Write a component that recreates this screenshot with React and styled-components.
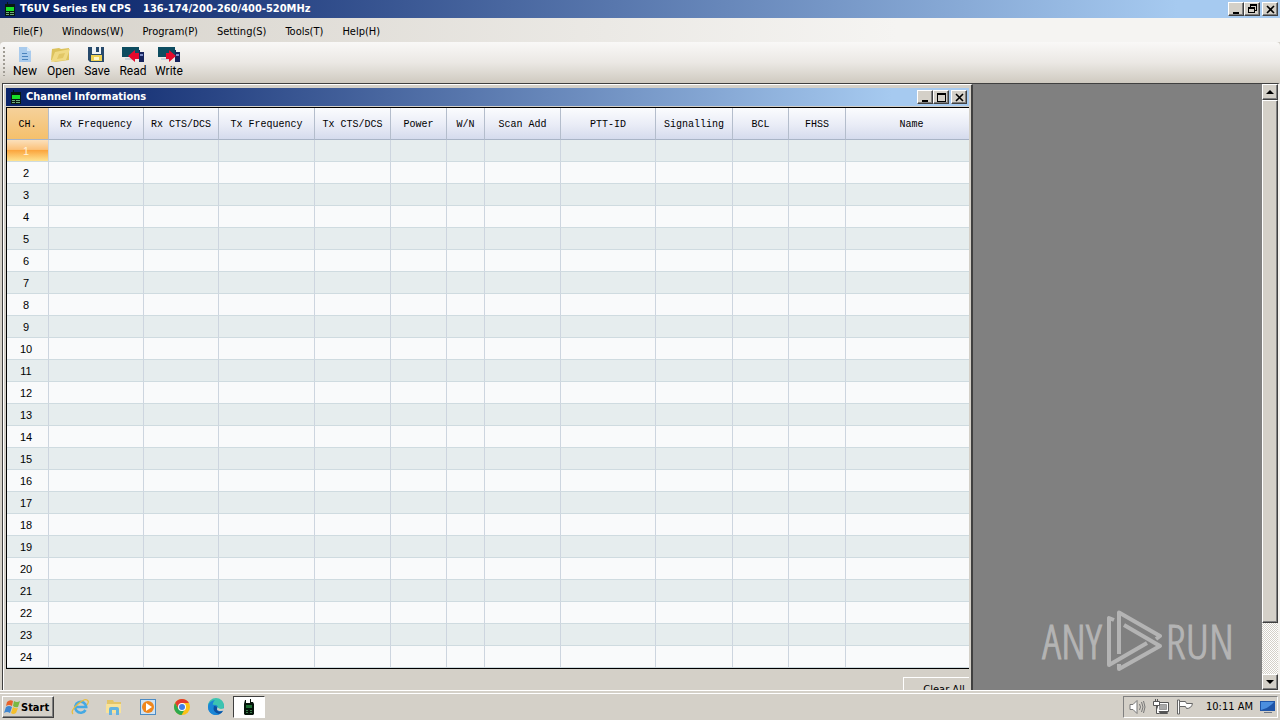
import React from "react";
import styled, { createGlobalStyle, css } from "styled-components";

const UI = `"DejaVu Sans Condensed", "DejaVu Sans", sans-serif`;

const Global = createGlobalStyle`
  * { box-sizing: border-box; }
  body { margin: 0; background: #d4d0c8; font-family: ${UI}; font-size: 11px; color: #000; }
  button { font: inherit; color: inherit; margin: 0; padding: 0; border: 0; background: none; }
  svg { display: block; }
`;

const Shell = styled.div`
  display: flex;
  flex-direction: column;
  height: 100vh;
  overflow: hidden;
`;

const TitleBar = styled.header`
  display: flex;
  align-items: center;
  flex: none;
  height: 18px;
  padding: 0 2px 0 4px;
  gap: 4px;
  background: linear-gradient(90deg, #0a246a 4%, #a6caf0 92%);
  color: #fff;
`;

const Title = styled.h1`
  display: flex;
  flex: 1;
  gap: 12px;
  margin: 0;
  font-size: 11px;
  line-height: 18px;
  font-weight: bold;
`;

const WinButtons = styled.div`
  display: flex;
  button:last-child { margin-left: 2px; }
`;

const raised = css`
  background: #d4d0c8;
  border: 1px solid;
  border-color: #fff #404040 #404040 #fff;
  box-shadow: inset -1px -1px 0 #808080;
`;

const WinButton = styled.button`
  ${raised}
  display: grid;
  place-items: center;
  width: 16px;
  height: 14px;
`;

const MenuBar = styled.nav`
  display: flex;
  flex: none;
  height: 24px;
  padding: 0 3px;
  background: linear-gradient(90deg, #d6d2ca, #f5f4f2 70%);
`;

const MenuButton = styled.button`
  padding: 3px 10px 0 10px;
  line-height: 22px;
  & + & { padding-left: 9px; }
`;

const ToolBar = styled.div`
  display: flex;
  flex: none;
  height: 41px;
  padding: 3px 3px 0;
  border-radius: 4px 4px 0 0;
  background: linear-gradient(#f9f8f7, #ebe8e4 50%, #cfcac0);
`;

const Grip = styled.div`
  width: 2px;
  margin: 2px 2px 7px 0;
  background: repeating-linear-gradient(#a09c94 0 2px, transparent 2px 4px);
`;

const ToolButton = styled.button`
  display: flex;
  flex-direction: column;
  align-items: center;
  width: 36px;
  font-family: Roboto, sans-serif;
  font-size: 12px;
  line-height: 16px;
  padding-top: 1px;
`;

const Workspace = styled.main`
  display: flex;
  flex: 1;
  min-height: 0;
  margin-left: 2px;
  border-top: 1px solid #404040;
  border-left: 1px solid #404040;
  border-right: 2px solid #f4f2ee;
  background: #808080;
`;

const Canvas = styled.div`
  display: flex;
  flex: 1;
  min-width: 0;
  justify-content: space-between;
  align-items: flex-start;
  overflow: hidden;
  height: 100%;
`;

const ChildWindow = styled.section`
  flex: none;
  width: 970px;
  max-width: 100%;
  min-height: 640px;
  padding: 3px 2px 2px 2px;
  background: #d4d0c8;
  border: 1px solid;
  border-width: 1px 2px 2px 1px;
  border-color: #fff #404040 #404040 #fff;
`;

const GridFrame = styled.div`
  margin-top: 1px;
  border: solid #000;
  border-width: 1px 0 1px 1px;
  overflow: hidden;
`;

const Table = styled.table`
  width: calc(100% + 8px);
  table-layout: fixed;
  border-collapse: separate;
  border-spacing: 0;
`;

const Head = styled.th`
  width: ${(p) => (p.$w ? `${p.$w}px` : "auto")};
  height: 32px;
  padding: 2px 0 0;
  font: 10px "Liberation Mono", monospace;
  text-align: center;
  white-space: nowrap;
  border-right: ${(p) => (p.$w ? "1px solid #b4bdcc" : "0")};
  border-bottom: 1px solid #a9b4c6;
  background: ${(p) => (p.$key ? "linear-gradient(#f5d19a, #f5c06c)" : "linear-gradient(#fbfcfe, #e9ecf6 55%, #d5dbed)")};
`;

const Row = styled.tr`
  background: ${(p) => (p.$odd ? "#e6edee" : "#f9fafb")};
`;

const Cell = styled.td`
  height: 22px;
  padding: 0;
  border-right: 1px solid #cdd5df;
  border-bottom: 1px solid #cfdbe0;
`;

const RowHead = styled.th`
  height: 22px;
  padding: 0 3px 0 0;
  font: 11px "Liberation Sans", sans-serif;
  text-align: center;
  border-right: 1px solid #cdd5df;
  border-bottom: 1px solid #cfdbe0;
  ${(p) => p.$current && css`
    color: #fff3dc;
    background: linear-gradient(#fbe0bb, #fbc27c 45%, #fba63f 50%, #fee391);
  `}
`;

const Footer = styled.div`
  display: flex;
  justify-content: flex-end;
  padding-top: 8px;
  overflow: hidden;
`;

const ClearButton = styled.button`
  ${raised}
  flex: none;
  width: 82px;
  height: 24px;
  margin-right: -16px;
`;

const Watermark = styled.div`
  display: flex;
  align-self: flex-end;
  align-items: center;
  gap: 3px;
  margin: 0 28px 18px 0;
  color: #b4b4b4;
  font-family: "Open Sans Condensed Light", "Open Sans Condensed", "Noto Sans ExtraCondensed", sans-serif;
  font-weight: 300;
  font-size: 47px;
  line-height: 62px;
  -webkit-text-stroke: 1px #b4b4b4;
`;

const ScrollBar = styled.div`
  display: flex;
  flex-direction: column;
  flex: none;
  width: 16px;
  background: repeating-conic-gradient(#fff 0 25%, #d4d0c8 0 50%) 0 0 / 2px 2px;
`;

const ScrollButton = styled.button`
  ${raised}
  display: grid;
  place-items: center;
  flex: none;
  height: 16px;
`;

const Thumb = styled.div`
  ${raised}
  flex: 524;
`;

const Track = styled.div`
  flex: 51;
`;

const TaskBar = styled.footer`
  display: flex;
  flex: none;
  align-items: center;
  height: 30px;
  padding: 3px 2px 0;
  border-top: 1px solid #fff;
  box-shadow: inset 0 2px 0 #d4d0c8, inset 0 3px 0 #fff;
`;

const StartButton = styled.button`
  ${raised}
  display: flex;
  align-items: center;
  width: 52px;
  height: 22px;
  padding-left: 1px;
  margin-right: 9px;
  font-weight: bold;
`;

const TaskButton = styled.button`
  display: grid;
  place-items: center;
  width: 34px;
  height: 22px;
  ${(p) => p.$active && css`
    width: 32px;
    background: #fff;
    border: 1px solid;
    border-color: #404040 #fff #fff #404040;
  `}
`;

const Tray = styled.div`
  display: flex;
  align-items: center;
  gap: 7px;
  height: 22px;
  margin-left: auto;
  padding: 0 1px 0 5px;
  border: 1px solid;
  border-color: #808080 #fff #fff #808080;
`;

const Clock = styled.time`
  margin-left: 5px;
  line-height: 20px;
`;

const RadioIcon = () => (
  <svg width="12" height="14" viewBox="0 0 12 14">
    <path d="M1 2h2V0h1v2h7v12H1z" fill="#071a10" />
    <path d="M2 5h8v4H2z" fill="#18e028" />
    <path d="M2 10h3v1H2zM6 10h4v1H6zM2 12h3v1H2zM6 12h4v1H6z" fill="#6fae80" />
  </svg>
);

const winGlyphs = {
  min: <path d="M2 8h6v2H2z" />,
  max: <path d="M1 1h9v9H1zM2 3v6h7V3z" fillRule="evenodd" />,
  restore: <path d="M3 0h7v7H8V9H1V3h2zM4 2v1h4v3h1V2zM2 5v3h5V5z" fillRule="evenodd" />,
  close: <path d="M2 2l7 7M9 2l-7 7" stroke="#000" strokeWidth="1.600" />,
};

const WindowControls = ({ middle }) => (
  <WinButtons>
    {["min", middle, "close"].map((k) => (
      <WinButton key={k} aria-label={k}>
        <svg width="11" height="10" viewBox="0 0 11 10">{winGlyphs[k]}</svg>
      </WinButton>
    ))}
  </WinButtons>
);

const NewIcon = () => (
  <svg width="22" height="17" viewBox="0 0 22 17">
    <path d="M5 1h8l4 4v11H5z" fill="#a9cbed" />
    <path d="M13 1v4h4z" fill="#d9e9f8" />
    <path d="M8 7.500h5M8 10.500h6M8 13.500h6" stroke="#4b83bd" />
  </svg>
);
const OpenIcon = () => (
  <svg width="22" height="17" viewBox="0 0 22 17">
    <path d="M2 3l7-1 2 1 8-1v12l-14 2-4-2z" fill="#dcc25c" />
    <path d="M5 6l15-3-4 11-15 2z" fill="#f0da84" />
    <path d="M9 8l6-1-2 5-6 1z" fill="#e2c766" />
  </svg>
);
const SaveIcon = () => (
  <svg width="22" height="17" viewBox="0 0 22 17">
    <path d="M2 1h16v15H4l-2-2z" fill="#27496b" />
    <path d="M6 1h9v7H6z" fill="#eef2f5" />
    <path d="M10 1h3v5h-3z" fill="#27496b" />
    <path d="M5 9h11v6H5z" fill="#f0d255" />
    <path d="M8 11h5v3H8z" fill="#fff8cc" />
  </svg>
);
const TransferIcon = ({ write }) => (
  <svg width="22" height="17" viewBox="0 0 22 17">
    <path d="M0 1h17v10H0z" fill="#0d4c60" />
    <path d="M3 12h8v2H3z" fill="#c7d4da" />
    <path d="M17 4h1v2h4v10h-5z" fill="#16235c" />
    <path d="M18 8h3v2h-3z" fill="#7f8fca" />
    <path
      d={write ? "M18 10l-7-6v3H8v6h3v3z" : "M6 10l7-6v3h4v6h-4v3z"}
      fill="#e5092c"
    />
  </svg>
);

const StartLogo = () => (
  <svg width="17" height="16" viewBox="0 0 17 16">
    <path d="M3 3q3-3 6-1L8 7Q5 5 2 7z" fill="#e8622a" />
    <path d="M10 2q3 2 6 0l-2 6q-3 1-5-1z" fill="#79b843" />
    <path d="M2 8q3-2 6 0l-2 6q-3-2-6 0z" fill="#3f86d0" />
    <path d="M9 8q3 2 5 1l-2 5q-3 2-5 0z" fill="#f5bf2b" />
  </svg>
);
const IeIcon = () => (
  <svg width="18" height="18" viewBox="0 0 18 18" fill="none">
    <path d="M14.500 12a5.500 5.500 0 1 1 .7-3H5" stroke="#45a9e3" strokeWidth="2.600" />
    <path d="M2 16Q-1 13 7 6t10-3q1 1-1 4" stroke="#e9bd3c" strokeWidth="1.300" />
  </svg>
);
const FolderIcon = () => (
  <svg width="18" height="18" viewBox="0 0 18 18">
    <path d="M2 2h6l1 2h7v10H2z" fill="#e3c568" />
    <path d="M1 6h15v9H1z" fill="#f8e299" />
    <path d="M4 17v-6q0-2 2-2h6q2 0 2 2v6h-3v-5H7v5z" fill="#63b3e0" />
  </svg>
);
const PlayerIcon = () => (
  <svg width="18" height="18" viewBox="0 0 18 18">
    <path d="M1 1h16v16H1z" fill="#4b8bc4" />
    <path d="M2 2h14v14H2z" fill="#cfe2f2" />
    <circle cx="9" cy="9" r="6" fill="#f0861c" />
    <path d="M7 5l6 4-6 4z" fill="#fff" />
  </svg>
);
const ChromeIcon = () => (
  <svg width="18" height="18" viewBox="0 0 18 18">
    <circle cx="9" cy="9" r="8" fill="#fbc116" />
    <path d="M2.100 5A8 8 0 0 1 15.900 5H9L5.500 11z" fill="#e33b2e" />
    <path d="M2.100 5A8 8 0 0 0 8.500 17l3.500-6H5.500z" fill="#2da94f" />
    <circle cx="9" cy="9" r="4" fill="#fff" />
    <circle cx="9" cy="9" r="3" fill="#3f7fe8" />
  </svg>
);
const EdgeIcon = () => (
  <svg width="18" height="18" viewBox="0 0 18 18">
    <circle cx="9" cy="9" r="8" fill="#1783d0" />
    <path d="M1 8a8 8 0 0 1 16 0q0 4-5 4-2 0-2-1 2-3-1-4-4-1-8 1z" fill="#3cc4b0" />
    <path d="M1 8q1-5 7-6-3 3-2 7 1 6 8 6-3 2.500-6 2Q1 16 1 8z" fill="#1a86d6" />
    <path d="M7 8q-2 6 5 8 3-1 4-3-6 2-6-2 1-3-3-3z" fill="#0e4f9e" />
    <path d="M10 9q1 1 0 2 0 2 4 2 2 0 4-1V9q-1 2-4 2-2 0-4-2z" fill="#d4d0c8" />
  </svg>
);
const TaskRadioIcon = () => (
  <svg width="14" height="17" viewBox="0 0 14 17">
    <path d="M3 1h1v3h4V0h1v3h2l1 2v10l-1 1H3l-1-1V5z" fill="#05140a" />
    <path d="M4 6h6v3H4z" fill="#1f6e33" />
    <path d="M4 11h2v1H4zM8 11h2v1H8zM4 13h2v1H4zM8 13h2v1H8z" fill="#3b7d4a" />
  </svg>
);
const SpeakerIcon = () => (
  <svg width="17" height="16" viewBox="0 0 17 16" fill="none" stroke="#777">
    <path d="M1 5.500h3l4-4v13l-4-4H1z" fill="#fff" />
    <path d="M10.500 5q2 3 0 6M12.500 3q3 5 0 10M14.500 2q3 6 0 12" />
  </svg>
);
const NetworkIcon = () => (
  <svg width="17" height="16" viewBox="0 0 17 16" fill="none" stroke="#555">
    <path d="M4.500 3.500h11v9h-11z" fill="#fff" />
    <path d="M6.500 5.500h7v5h-7z" fill="#a8a8a8" stroke="#999" />
    <path d="M6.500 13.500h8v1h-8z" fill="#fff" />
    <path d="M.5 2.500h6v4h-6zM3.500 6.500v8h3M2.500 0v3M4.500 0v3" fill="#fff" />
  </svg>
);
const FlagIcon = () => (
  <svg width="17" height="16" viewBox="0 0 17 16" fill="none" stroke="#666">
    <path d="M.5 1v14h2V1z" fill="#fff" />
    <path d="M2.500 2.500h6l1 2h6q-1 5-6 5l-1-2h-6z" fill="#fff" />
  </svg>
);
const DesktopIcon = () => (
  <svg width="16" height="14" viewBox="0 0 16 14">
    <path d="M0 1h15v10H0z" fill="#1f55a8" />
    <path d="M1 2h13Q9 8 1 10z" fill="#4c8fdf" />
    <path d="M4 12h8v1H4z" fill="#6c7686" />
  </svg>
);
const PlayLogo = () => (
  <svg width="58" height="62" viewBox="0 0 58 62" fill="none" stroke="#b4b4b4" strokeWidth="4" strokeLinejoin="round">
    <path d="M51 29L55 26 14 2.500V44" />
    <path d="M9 10L4 8V55L42 33" />
    <path d="M14 54V59L55 36 19 15" />
  </svg>
);

const menus = ["File(F)", "Windows(W)", "Program(P)", "Setting(S)", "Tools(T)", "Help(H)"];
const tools = [
  ["New", <NewIcon />],
  ["Open", <OpenIcon />],
  ["Save", <SaveIcon />],
  ["Read", <TransferIcon />],
  ["Write", <TransferIcon write />],
];
const columns = [
  ["CH.", 42], ["Rx Frequency", 95], ["Rx CTS/DCS", 75], ["Tx Frequency", 96],
  ["Tx CTS/DCS", 76], ["Power", 56], ["W/N", 38], ["Scan Add", 76], ["PTT-ID", 95],
  ["Signalling", 77], ["BCL", 56], ["FHSS", 57], ["Name", 0],
];
const channels = Array.from({ length: 24 }, (_, i) => i + 1);
const launchers = [
  ["Internet Explorer", <IeIcon />],
  ["File Explorer", <FolderIcon />],
  ["Media Player", <PlayerIcon />],
  ["Chrome", <ChromeIcon />],
  ["Edge", <EdgeIcon />],
];

export default function App() {
  return (
    <Shell>
      <Global />
      <TitleBar>
        <RadioIcon />
        <Title>
          <span>T6UV Series EN CPS</span>
          <span>136-174/200-260/400-520MHz</span>
        </Title>
        <WindowControls middle="restore" />
      </TitleBar>
      <MenuBar>
        {menus.map((m) => <MenuButton key={m}>{m}</MenuButton>)}
      </MenuBar>
      <ToolBar>
        <Grip />
        {tools.map(([label, icon]) => (
          <ToolButton key={label}>{icon}<span>{label}</span></ToolButton>
        ))}
      </ToolBar>
      <Workspace>
        <Canvas>
          <ChildWindow>
            <TitleBar as="div">
              <RadioIcon />
              <Title as="h2">Channel Informations</Title>
              <WindowControls middle="max" />
            </TitleBar>
            <GridFrame>
              <Table>
                <thead>
                  <tr>
                    {columns.map(([name, w], i) => (
                      <Head key={name} scope="col" $w={w} $key={i === 0}>{name}</Head>
                    ))}
                  </tr>
                </thead>
                <tbody>
                  {channels.map((n) => (
                    <Row key={n} $odd={n % 2 === 1}>
                      <RowHead scope="row" $current={n === 1}>{n}</RowHead>
                      {columns.slice(1).map(([name]) => <Cell key={name} />)}
                    </Row>
                  ))}
                </tbody>
              </Table>
            </GridFrame>
            <Footer><ClearButton>Clear All</ClearButton></Footer>
          </ChildWindow>
          <Watermark>
            <span>ANY</span>
            <PlayLogo />
            <span>RUN</span>
          </Watermark>
        </Canvas>
        <ScrollBar>
          <ScrollButton aria-label="Scroll up">
            <svg width="8" height="4" viewBox="0 0 8 4"><path d="M0 4l4-4 4 4z" /></svg>
          </ScrollButton>
          <Thumb />
          <Track />
          <ScrollButton aria-label="Scroll down">
            <svg width="8" height="4" viewBox="0 0 8 4"><path d="M0 0l4 4 4-4z" /></svg>
          </ScrollButton>
        </ScrollBar>
      </Workspace>
      <TaskBar>
        <StartButton><StartLogo />Start</StartButton>
        {launchers.map(([name, icon]) => (
          <TaskButton key={name} aria-label={name}>{icon}</TaskButton>
        ))}
        <TaskButton $active aria-label="T6UV Series EN CPS"><TaskRadioIcon /></TaskButton>
        <Tray>
          <SpeakerIcon />
          <NetworkIcon />
          <FlagIcon />
          <Clock>10:11 AM</Clock>
          <DesktopIcon />
        </Tray>
      </TaskBar>
    </Shell>
  );
}
